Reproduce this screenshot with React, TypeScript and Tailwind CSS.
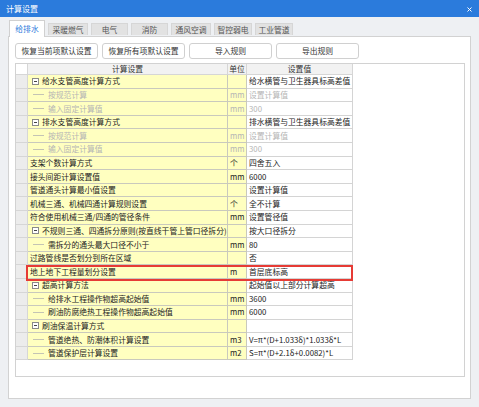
import React from 'react'

// 行类型：分组（带折叠框）、子项（缩进 + 树线）、普通
type Row = {
  kind: 'group' | 'child' | 'plain'
  name: string
  unit?: string
  value?: string
  disabled?: boolean
  highlight?: boolean
}

const TABS = [
  { label: '给排水', w: 'w-[36px]' },
  { label: '采暖燃气', w: 'w-[40px]' },
  { label: '电气', w: 'w-[37px]' },
  { label: '消防', w: 'w-[37px]' },
  { label: '通风空调', w: 'w-[40px]' },
  { label: '智控弱电', w: 'w-[38px]' },
  { label: '工业管道', w: 'w-[38px]' },
]

const BUTTONS = ['恢复当前项默认设置', '恢复所有项默认设置', '导入规则', '导出规则']

const ROWS: Row[] = [
  { kind: 'group', name: '给水支管高度计算方式', value: '给水横管与卫生器具标高差值' },
  { kind: 'child', name: '按规范计算', unit: 'mm', value: '设置计算值', disabled: true },
  { kind: 'child', name: '输入固定计算值', unit: 'mm', value: '300', disabled: true },
  { kind: 'group', name: '排水支管高度计算方式', value: '排水横管与卫生器具标高差值' },
  { kind: 'child', name: '按规范计算', unit: 'mm', value: '设置计算值', disabled: true },
  { kind: 'child', name: '输入固定计算值', unit: 'mm', value: '300', disabled: true },
  { kind: 'plain', name: '支架个数计算方式', unit: '个', value: '四舍五入' },
  { kind: 'plain', name: '接头间距计算设置值', unit: 'mm', value: '6000' },
  { kind: 'plain', name: '管道通头计算最小值设置', value: '设置计算值' },
  { kind: 'plain', name: '机械三通、机械四通计算规则设置', unit: '个', value: '全不计算' },
  { kind: 'plain', name: '符合使用机械三通/四通的管径条件', unit: 'mm', value: '设置管径值' },
  { kind: 'group', name: '不规则三通、四通拆分原则(按直线干管上管口径拆分)', value: '按大口径拆分' },
  { kind: 'child', name: '需拆分的通头最大口径不小于', unit: 'mm', value: '80' },
  { kind: 'plain', name: '过路管线是否划分到所在区域', value: '否' },
  { kind: 'plain', name: '地上地下工程量划分设置', unit: 'm', value: '首层底标高', highlight: true },
  { kind: 'group', name: '超高计算方法', value: '起始值以上部分计算超高' },
  { kind: 'child', name: '给排水工程操作物超高起始值', unit: 'mm', value: '3600' },
  { kind: 'child', name: '刷油防腐绝热工程操作物超高起始值', unit: 'mm', value: '6000' },
  { kind: 'group', name: '刷油保温计算方式', value: '' },
  { kind: 'child', name: '管道绝热、防潮体积计算设置', unit: 'm3', value: 'V=π*(D+1.033δ)*1.033δ*L' },
  { kind: 'child', name: '管道保护层计算设置', unit: 'm2', value: 'S=π*(D+2.1δ+0.0082)*L' },
]

function MinusBox() {
  return (
    <span className="w-[7px] h-[7px] border border-[#8a8a8a] bg-white flex items-center justify-center shrink-0">
      <span className="w-[3px] h-px bg-[#444]" />
    </span>
  )
}

function TableRow({ row }: { row: Row }) {
  const txt = row.disabled ? 'text-[#b5b5b5]' : 'text-[#222]'
  return (
    <div className="relative flex h-[13.6px]">
      <div className="w-[12px] shrink-0 bg-[#ececec] border-r border-b border-[#d6d6d6]" />
      <div className={`w-[200px] shrink-0 bg-[#ffffc0] border-r border-b border-[#c9c9bd] flex items-center whitespace-nowrap overflow-hidden ${txt}`}>
        {row.kind === 'group' && (
          <div className="flex items-center gap-[3px] pl-[4px]">
            <MinusBox />
            <span>{row.name}</span>
          </div>
        )}
        {row.kind === 'child' && (
          <div className="flex items-center pl-[5px]">
            <span className="w-[11px] h-px bg-[#c4c4b4] mr-[4px]" />
            <span>{row.name}</span>
          </div>
        )}
        {row.kind === 'plain' && <span className="pl-[2px]">{row.name}</span>}
      </div>
      <div className={`w-[19px] shrink-0 bg-[#ffffc0] border-r border-b border-[#c9c9bd] flex items-center pl-[2px] ${txt}`}>
        {row.unit}
      </div>
      <div className={`w-[106px] shrink-0 bg-white border-r border-b border-[#d4d4d4] flex items-center pl-[2px] whitespace-nowrap overflow-hidden ${txt}`}>
        {row.value}
      </div>
      {row.highlight && (
        <div className="absolute left-[10px] top-[-0.5px] w-[327px] h-[16px] border-2 border-[#e63b35] z-10 pointer-events-none" />
      )}
    </div>
  )
}

export default function App() {
  return (
    <div
      className="w-[479px] h-[407px] bg-[#eef0f3] flex flex-col overflow-hidden text-[7.8px] leading-none"
      style={{ fontFamily: '"Noto Sans CJK SC", "Noto Sans", sans-serif' }}
    >
      {/* 标题栏 */}
      <div className="h-[17px] bg-[#2b7bdc] flex items-center justify-between pl-[6px] pr-[7px] text-white text-[8px]">
        <span>计算设置</span>
        <svg width="5" height="5" viewBox="0 0 5 5" className="mt-px">
          <path d="M0.5 0.5L4.5 4.5M4.5 0.5L0.5 4.5" stroke="white" strokeWidth="1" />
        </svg>
      </div>

      {/* 页签 */}
      <div className="mt-[3px] ml-[9px] h-[16px] flex items-end gap-[3px]">
        {TABS.map((t, i) =>
          i === 0 ? (
            <div
              key={t.label}
              className={`${t.w} h-[17px] -mb-px relative z-10 bg-white border border-b-0 border-[#d0d0d0] flex items-center justify-center text-[#2b7bdc]`}
            >
              {t.label}
            </div>
          ) : (
            <div
              key={t.label}
              className={`${t.w} h-[12px] mb-px bg-[#e2e2e2] border border-b-0 border-[#d6d6d6] flex items-center justify-center text-[#555]`}
            >
              {t.label}
            </div>
          )
        )}
      </div>

      {/* 内容面板 */}
      <div className="ml-[8px] w-[463px] h-[363px] bg-white border border-[#d2d2d2] pt-[6px] pl-[6px]">
        <div className="flex gap-[4px]">
          {BUTTONS.map(b => (
            <button
              key={b}
              className="w-[83px] h-[16px] bg-white border border-[#d0d0d0] rounded-[3px] text-[#333] flex items-center justify-center"
            >
              {b}
            </button>
          ))}
        </div>

        <div className="mt-[4px] w-[450px] h-[314px] border border-[#d2d2d2] bg-white">
          {/* 表头 */}
          <div className="flex h-[11px] text-[#333]">
            <div className="w-[12px] shrink-0 bg-white border-r border-b border-[#d6d6d6]" />
            <div className="w-[200px] shrink-0 bg-[#f2f2f2] border-r border-b border-[#d6d6d6] flex items-center justify-center">
              计算设置
            </div>
            <div className="w-[19px] shrink-0 bg-[#f2f2f2] border-r border-b border-[#d6d6d6] flex items-center justify-center">
              单位
            </div>
            <div className="w-[106px] shrink-0 bg-[#f2f2f2] border-r border-b border-[#d6d6d6] flex items-center justify-center">
              设置值
            </div>
          </div>
          {ROWS.map((r, i) => (
            <TableRow key={i} row={r} />
          ))}
        </div>
      </div>
    </div>
  )
}
